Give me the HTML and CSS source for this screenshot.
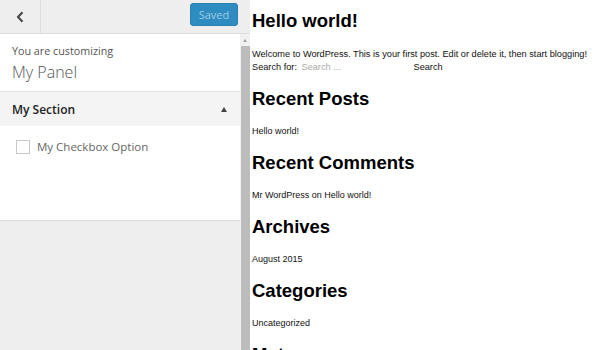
FILE: index.html
```html
<!DOCTYPE html>
<html lang="en">
<head>
    <meta charset="UTF-8">
    <meta name="viewport" content="width=device-width, initial-scale=1.0">
    <title>Customizer</title>
    <link rel="stylesheet" href="styles.css">
</head>
<body>
    <div class="app">
        <aside class="customizer">
            <header class="top-bar">
                <button class="back" type="button">
                    <svg width="8" height="12" viewBox="0 0 8 12"><path d="M6.5 1.2 L2 6 L6.5 10.8" fill="none" stroke="#444" stroke-width="2"/></svg>
                </button>
                <button class="save" type="button">Saved</button>
            </header>
            <div class="panel-body">
                <div class="panel-scroll">
                    <div class="panel-info">
                        <span class="action">You are customizing</span>
                        <h3 class="panel-title">My Panel</h3>
                    </div>
                    <div class="section-head">
                        <h3>My Section</h3>
                        <span class="toggle"></span>
                    </div>
                    <div class="section-content">
                        <label class="check"><span class="box"></span>My Checkbox Option</label>
                    </div>
                    <div class="panel-rest"></div>
                </div>
                <div class="scrollbar">
                    <span class="arrow"></span>
                    <span class="thumb"></span>
                </div>
            </div>
        </aside>

        <main class="preview">
            <h1>Hello world!</h1>
            <p class="post">Welcome to WordPress. This is your first post. Edit or delete it, then start blogging!<br>
                <label for="s">Search for:</label> <input type="text" id="s" placeholder="Search ..."><button type="button">Search</button>
            </p>

            <h2>Recent Posts</h2>
            <ul><li>Hello world!</li></ul>

            <h2>Recent Comments</h2>
            <ul><li>Mr WordPress on Hello world!</li></ul>

            <h2>Archives</h2>
            <ul><li>August 2015</li></ul>

            <h2>Categories</h2>
            <ul><li>Uncategorized</li></ul>

            <h2>Meta</h2>
        </main>
    </div>
</body>
</html>
```

FILE: styles.css
```css
html, body {
    margin: 0;
    height: 100%;
    overflow: hidden;
}

.app {
    display: flex;
    height: 350px;
}

/* left customizer pane */
.customizer {
    width: 250px;
    flex-shrink: 0;
    display: flex;
    flex-direction: column;
    background-color: #eeeeee;
    font-family: "Open Sans", "Liberation Sans", sans-serif;
    color: #555;
}

.top-bar {
    display: flex;
    justify-content: space-between;
    align-items: flex-start;
    height: 33px;
    border-bottom: 1px solid #dddddd;
    background-color: #eeeeee;
}

.back {
    width: 41px;
    height: 33px;
    border: none;
    border-right: 1px solid #dddddd;
    background: none;
    padding: 0;
    display: flex;
    align-items: center;
    justify-content: center;
}

.save {
    margin: 3px 12px 0 0;
    width: 48px;
    height: 23px;
    border: 1px solid #2a7fb0;
    border-radius: 3px;
    background-color: #2e8cc1;
    color: #9fcbe4;
    font-family: "Open Sans", sans-serif;
    font-size: 11px;
    padding: 0;
}

.panel-body {
    flex: 1;
    display: flex;
    min-height: 0;
}

.panel-scroll {
    width: 240px;
    display: flex;
    flex-direction: column;
}

.panel-info {
    background-color: #fff;
    padding: 10px 12px 8px;
    border-bottom: 1px solid #e4e4e4;
}

.action {
    display: block;
    font-size: 10.75px;
    line-height: 14px;
    color: #555;
}

.panel-title {
    margin: 3px 0 0;
    font-size: 16px;
    line-height: 22px;
    font-weight: 300;
    color: #555;
}

.section-head {
    display: flex;
    justify-content: space-between;
    align-items: center;
    height: 34px;
    padding: 0 13px 0 12px;
    background-color: #f4f4f4;
}

.section-head h3 {
    margin: 0;
    font-size: 12px;
    font-weight: 600;
    color: #222;
}

.toggle {
    width: 0;
    height: 0;
    border-left: 3.5px solid transparent;
    border-right: 3.5px solid transparent;
    border-bottom: 5px solid #444;
}

.section-content {
    height: 95px;
    background-color: #fff;
    border-bottom: 1px solid #dddddd;
    padding: 13px 0 0 16px;
    box-sizing: border-box;
}

.check {
    display: flex;
    align-items: center;
    gap: 7px;
    font-size: 11.5px;
    line-height: 15px;
    color: #666;
}

.box {
    width: 12px;
    height: 12px;
    border: 1px solid #c8c8c8;
    background-color: #fff;
}

.panel-rest {
    flex: 1;
    background-color: #eeeeee;
}

.scrollbar {
    width: 10px;
    display: flex;
    flex-direction: column;
    align-items: center;
    background-color: #f1f1f1;
}

.arrow {
    margin: 5px 0 4px;
    width: 0;
    height: 0;
    border-left: 2.5px solid transparent;
    border-right: 2.5px solid transparent;
    border-bottom: 3px solid #a3a3a3;
}

.thumb {
    flex: 1;
    width: 9px;
    background-color: #bcbcbc;
}

/* right preview pane */
.preview {
    flex: 1;
    background-color: #fff;
    padding: 10px 0 0 2px;
    font-family: "Liberation Sans", Arial, sans-serif;
    color: #111;
}

h1, h2 {
    margin: 0;
    font-size: 18.5px;
    line-height: 22px;
    font-weight: bold;
    color: #000;
}

.post {
    margin: 16px 0 14px;
    font-size: 9.2px;
    line-height: 13px;
}

.post input {
    width: 112px;
    margin: 0 0 0 2px;
    padding: 0;
    border: none;
    font-family: "Liberation Sans", Arial, sans-serif;
    font-size: 9.2px;
    outline: none;
}

.post input::placeholder {
    color: #aaa;
}

.post button {
    margin: 0;
    padding: 0;
    border: none;
    background: none;
    font-family: "Liberation Sans", Arial, sans-serif;
    font-size: 9.2px;
    color: #111;
}

ul {
    list-style: none;
    margin: 14.5px 0 14.5px;
    padding: 0;
    font-size: 9px;
    line-height: 13px;
}
```
